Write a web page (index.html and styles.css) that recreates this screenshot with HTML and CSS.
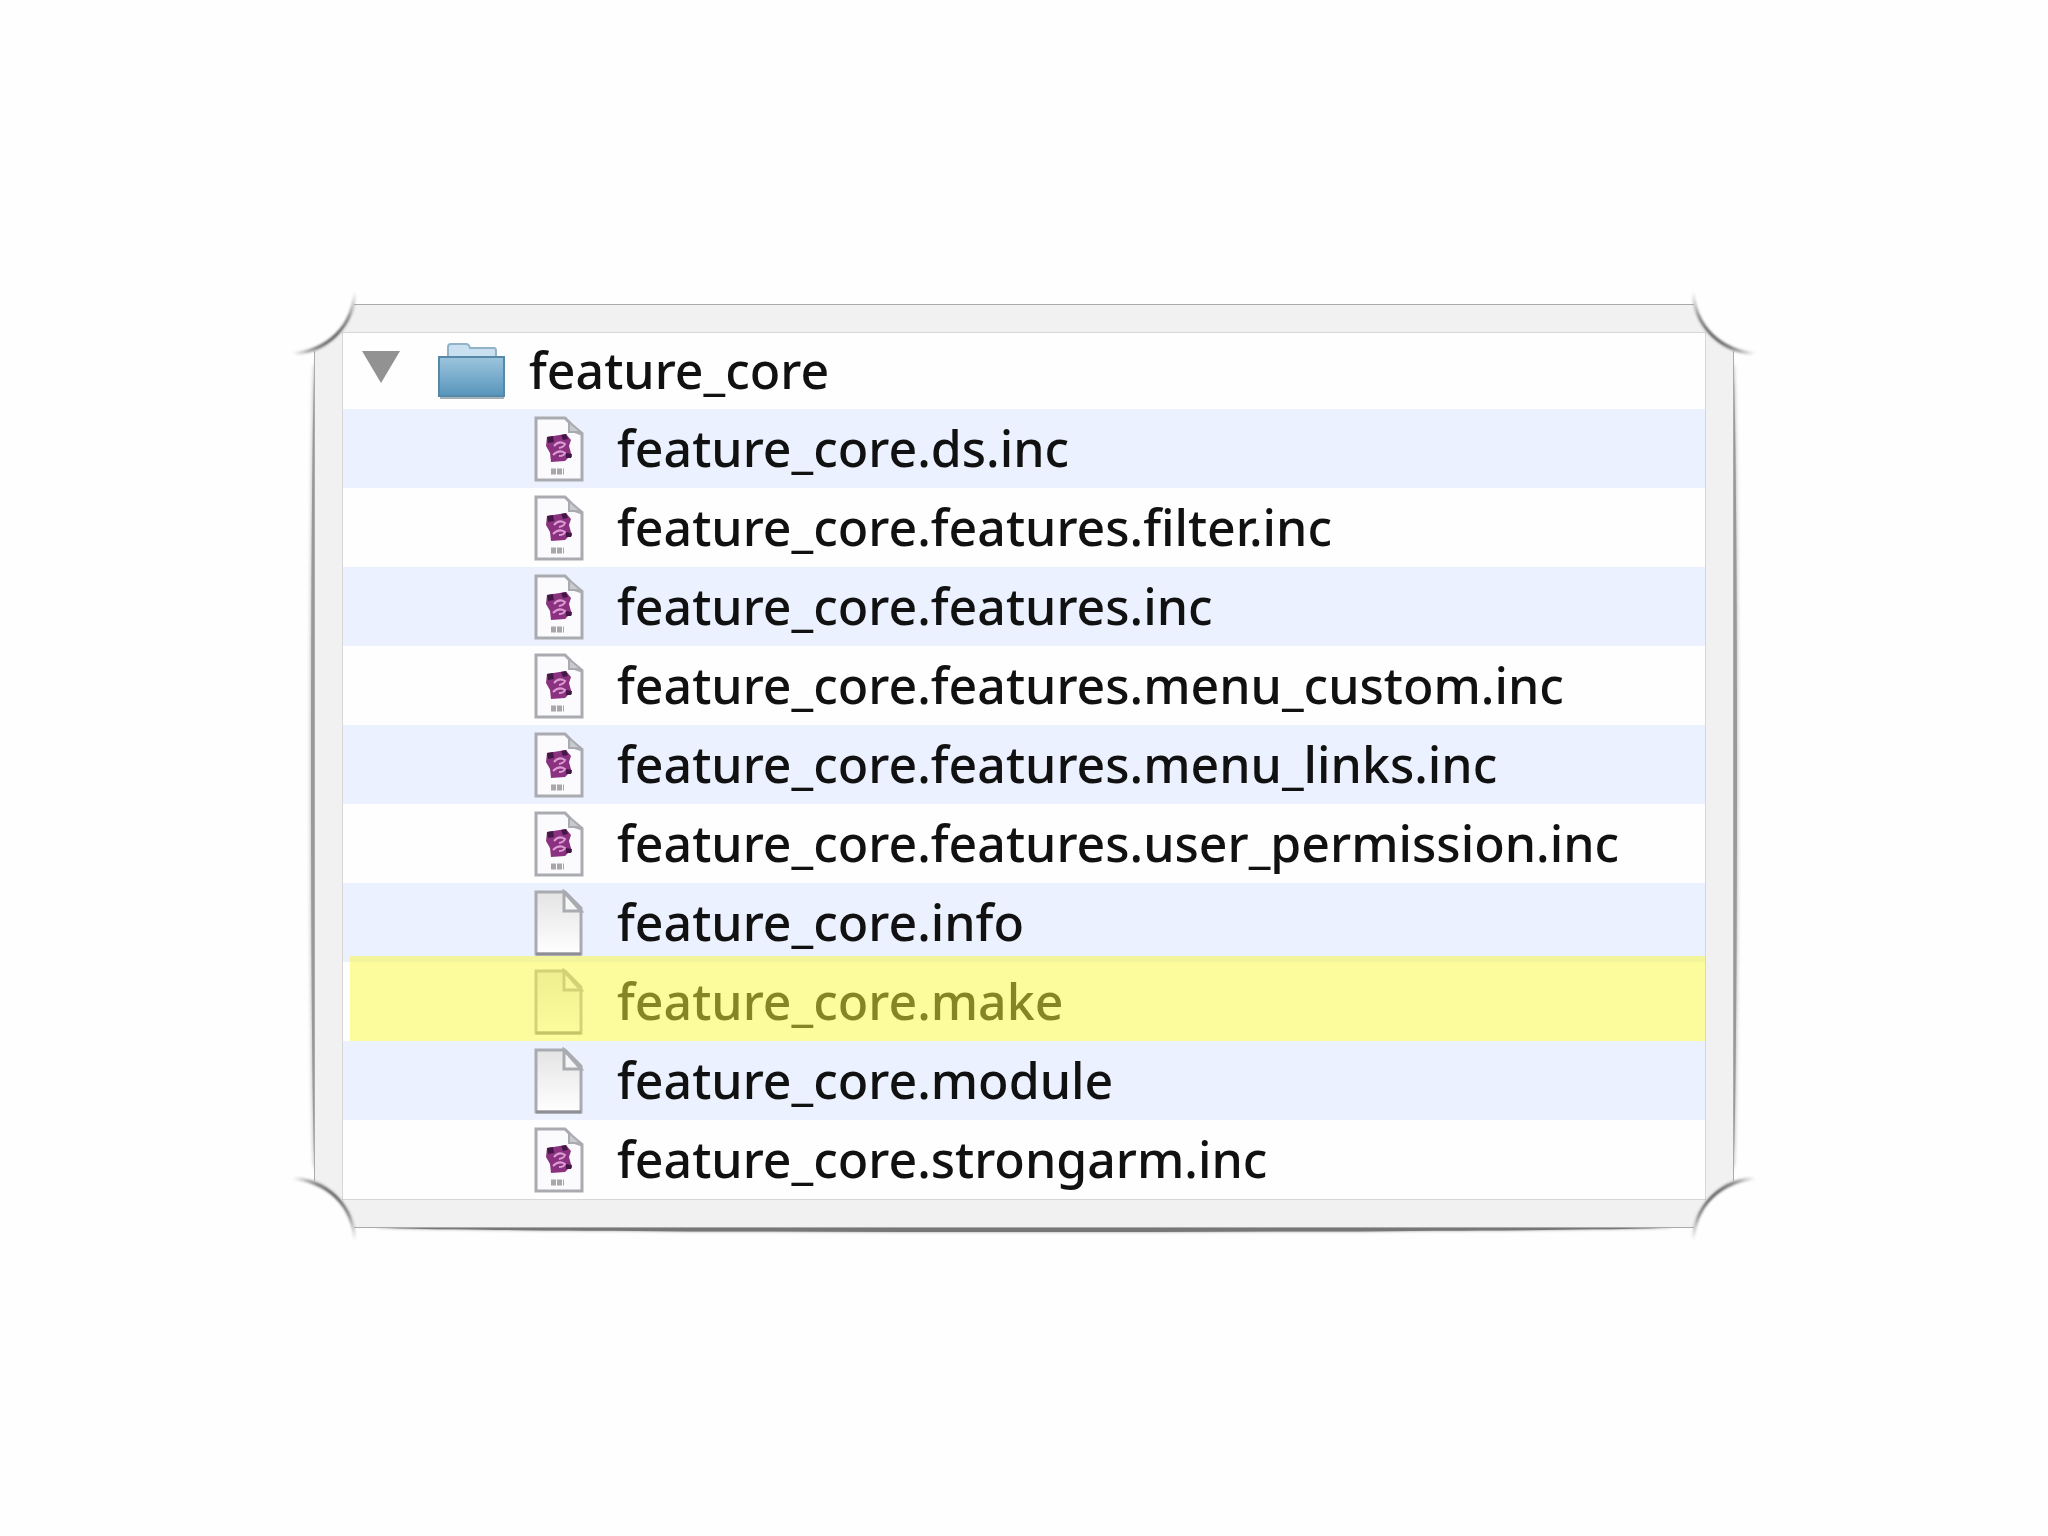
FILE: index.html
```
<!DOCTYPE html>
<html lang="en">
<head>
    <meta charset="UTF-8">
    <meta name="viewport" content="width=device-width, initial-scale=1.0">
    <title>feature_core</title>
    <link rel="stylesheet" href="styles.css">
</head>
<body>
    <!-- Shared icons -->
    <svg class="icon-defs" aria-hidden="true">
        <defs>
            <linearGradient id="paper" x1="0" y1="0" x2="0" y2="1">
                <stop offset="0" stop-color="#e4e4e4"/>
                <stop offset="1" stop-color="#ffffff"/>
            </linearGradient>
            <linearGradient id="folder-front" x1="0" y1="0" x2="0" y2="1">
                <stop offset="0" stop-color="#9cc5dd"/>
                <stop offset="1" stop-color="#5795bb"/>
            </linearGradient>
            <linearGradient id="arc-fade" gradientUnits="userSpaceOnUse" x1="8" y1="70" x2="70" y2="8">
                <stop offset="0" stop-color="#444" stop-opacity="0"/>
                <stop offset="0.25" stop-color="#444" stop-opacity="0.6"/>
                <stop offset="0.5" stop-color="#444" stop-opacity="0.8"/>
                <stop offset="0.75" stop-color="#444" stop-opacity="0.6"/>
                <stop offset="1" stop-color="#444" stop-opacity="0"/>
            </linearGradient>
            <filter id="soft" x="-10%" y="-10%" width="120%" height="120%">
                <feGaussianBlur stdDeviation="1"/>
            </filter>
        </defs>
        <symbol id="page" viewBox="0 0 52 68">
            <path d="M3 3H32L48 19V65H3Z" fill="url(#paper)" stroke="#a9abb0" stroke-width="3"/>
            <path d="M31 3V22H48Z" fill="#f6f6f6" stroke="#a9abb0" stroke-width="3"/>
            <path d="M3 65H48" stroke="#8d8f94" stroke-width="3"/>
        </symbol>
        <symbol id="script" viewBox="0 0 52 68">
            <path d="M3 3H32L37 8V15L49 19V65H3Z" fill="#fbfafc" stroke="#a9abb0" stroke-width="3"/>
            <path d="M36 7V17H48Z" fill="#c9cacd" stroke="#a9abb0" stroke-width="2"/>
            <path d="M14 22L33 19L38 25L36 31L39 42L35 43L32 46L18 47L17 38L13 31Z" fill="#8a327f"/>
            <path d="M14 22L20 21L21 27L15 28ZM28 20L33 19L35 24L30 25ZM33 38L39 39L38 43L33 43Z" fill="#431846"/>
            <path d="M21 31Q26 25 32 29Q31 32 26 33M20 40Q26 34 32 38Q31 41 26 41" fill="none" stroke="#dd9bd3" stroke-width="2"/>
            <path d="M18 55H31M18 58H31" stroke="#aaa6aa" stroke-width="3" stroke-dasharray="5 1"/>
        </symbol>
        <symbol id="corner" viewBox="0 0 80 80">
            <circle cx="12" cy="12" r="58" fill="#fefefe"/>
            <path d="M4 70C42 70 70 42 70 4C69 43 43 67 4 70Z" fill="url(#arc-fade)" stroke="url(#arc-fade)" stroke-width="3" filter="url(#soft)"/>
        </symbol>
    </svg>

    <main class="frame">
        <svg class="corner top-left" aria-hidden="true"><use href="#corner"/></svg>
        <svg class="corner top-right" aria-hidden="true"><use href="#corner"/></svg>
        <svg class="corner bottom-left" aria-hidden="true"><use href="#corner"/></svg>
        <svg class="corner bottom-right" aria-hidden="true"><use href="#corner"/></svg>

        <div class="listing">
            <div class="row folder-row">
                <button class="toggle" type="button" aria-label="Collapse feature_core" aria-expanded="true">
                    <svg viewBox="0 0 38 32"><path d="M0 0H38L19 32Z" fill="#929292"/></svg>
                </button>
                <svg class="folder-icon" viewBox="0 0 70 58" aria-hidden="true">
                    <path d="M11 16V5Q11 2 14 2H29Q32 2 33 6H57Q59 6 59 9V16Z" fill="#c8e0f0" stroke="#91b2c7" stroke-width="2"/>
                    <path d="M2 15H67V54H2Z" fill="url(#folder-front)" stroke="#5688a8" stroke-width="2"/>
                    <path d="M3 56H67" stroke="#a5b0b7" stroke-width="2"/>
                </svg>
                <span class="name">feature_core</span>
            </div>
            <ul class="files">
                <li class="row"><svg class="file-icon"><use href="#script"/></svg><span class="name">feature_core.ds.inc</span></li>
                <li class="row"><svg class="file-icon"><use href="#script"/></svg><span class="name">feature_core.features.filter.inc</span></li>
                <li class="row"><svg class="file-icon"><use href="#script"/></svg><span class="name">feature_core.features.inc</span></li>
                <li class="row"><svg class="file-icon"><use href="#script"/></svg><span class="name">feature_core.features.menu_custom.inc</span></li>
                <li class="row"><svg class="file-icon"><use href="#script"/></svg><span class="name">feature_core.features.menu_links.inc</span></li>
                <li class="row"><svg class="file-icon"><use href="#script"/></svg><span class="name">feature_core.features.user_permission.inc</span></li>
                <li class="row"><svg class="file-icon"><use href="#page"/></svg><span class="name">feature_core.info</span></li>
                <li class="row marked"><svg class="file-icon"><use href="#page"/></svg><span class="name">feature_core.make</span></li>
                <li class="row"><svg class="file-icon"><use href="#page"/></svg><span class="name">feature_core.module</span></li>
                <li class="row"><svg class="file-icon"><use href="#script"/></svg><span class="name">feature_core.strongarm.inc</span></li>
            </ul>
        </div>
    </main>
</body>
</html>
```
FILE: styles.css
```
* {
    box-sizing: border-box;
}

body {
    margin: 0;
    padding: 304px 314px;
    background-color: #fefefe;
    color: #111;
    font-family: "Noto Sans", "Open Sans", sans-serif;
    font-size: 50px;
    font-weight: 500;
    line-height: 64px;
}

.icon-defs {
    position: absolute;
    width: 0;
    height: 0;
}

.frame {
    position: relative;
    padding: 27px;
    background-color: #f2f1f1;
    border: 1px solid #aaa;
}

/* Bowed shadows under the edges of the frame */
.frame::before,
.frame::after {
    content: "";
    position: absolute;
    z-index: -1;
    background-color: #999;
}

.frame::before {
    top: 60px;
    bottom: 60px;
    left: -4px;
    right: -4px;
    border-radius: 4px / 50%;
    box-shadow: 0 0 4px #aaa;
}

.frame::after {
    left: 60px;
    right: 60px;
    bottom: -5px;
    height: 10px;
    border-radius: 50%;
    background-color: #777;
    box-shadow: 0 0 3px #999;
}

/* Cut-out corners */
.corner {
    position: absolute;
    width: 80px;
    height: 80px;
}

.top-left {
    top: -21px;
    left: -30px;
}

.top-right {
    top: -21px;
    right: -30px;
    transform: scaleX(-1);
}

.bottom-left {
    bottom: -21px;
    left: -30px;
    transform: scaleY(-1);
}

.bottom-right {
    bottom: -21px;
    right: -30px;
    transform: scale(-1);
}

.listing {
    background-color: #fefefe;
    border: 1px solid #d8d6d6;
}

.files {
    margin: 0;
    padding: 0;
    list-style: none;
}

.row {
    display: flex;
    align-items: center;
    height: 79px;
    padding-left: 190px;
}

.row .name {
    padding-bottom: 2px;
}

.files .row:nth-child(odd) {
    background-color: #ebf1fe;
}

.folder-row {
    height: 76px;
    padding-left: 19px;
}

.toggle {
    width: 38px;
    height: 32px;
    margin-right: 37px;
    margin-bottom: 8px;
    padding: 0;
    border: none;
    background: none;
}

.toggle svg {
    display: block;
}

.folder-icon {
    width: 70px;
    height: 58px;
    margin-right: 22px;
}

.file-icon {
    width: 52px;
    height: 68px;
    margin-right: 32px;
}

/* Translucent highlighter over one entry */
.marked {
    position: relative;
}

.marked::after {
    content: "";
    position: absolute;
    top: -6px;
    right: 0;
    bottom: 0;
    left: 7px;
    background-color: rgba(252, 250, 60, 0.5);
}
```
